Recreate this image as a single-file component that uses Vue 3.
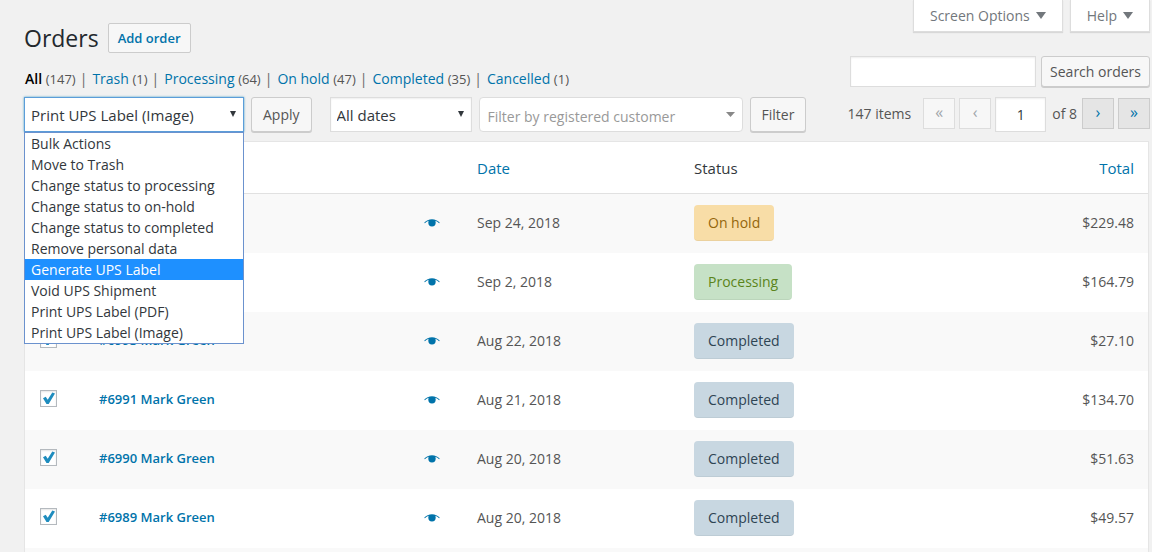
<script setup>
import { ref } from 'vue'

const views = [
  { label: 'All', count: 147, current: true },
  { label: 'Trash', count: 1 },
  { label: 'Processing', count: 64 },
  { label: 'On hold', count: 47 },
  { label: 'Completed', count: 35 },
  { label: 'Cancelled', count: 1 },
]

const actions = [
  'Bulk Actions',
  'Move to Trash',
  'Change status to processing',
  'Change status to on-hold',
  'Change status to completed',
  'Remove personal data',
  'Generate UPS Label',
  'Void UPS Shipment',
  'Print UPS Label (PDF)',
  'Print UPS Label (Image)',
]

const action = ref('Print UPS Label (Image)')
const highlighted = ref('Generate UPS Label')
const search = ref('')
const page = ref('1')

const orders = ref([
  { id: 6995, name: 'Mark Green', date: 'Sep 24, 2018', status: 'On hold', total: '$229.48', checked: true },
  { id: 6994, name: 'Mark Green', date: 'Sep 2, 2018', status: 'Processing', total: '$164.79', checked: true },
  { id: 6993, name: 'Mark Green', date: 'Aug 22, 2018', status: 'Completed', total: '$27.10', checked: true },
  { id: 6991, name: 'Mark Green', date: 'Aug 21, 2018', status: 'Completed', total: '$134.70', checked: true },
  { id: 6990, name: 'Mark Green', date: 'Aug 20, 2018', status: 'Completed', total: '$51.63', checked: true },
  { id: 6989, name: 'Mark Green', date: 'Aug 20, 2018', status: 'Completed', total: '$49.57', checked: true },
])

const statusClass = (s) => 'status-' + s.toLowerCase().replace(' ', '-')
</script>

<template>
  <main class="page">
    <header class="top">
      <div class="title">
        <h1>Orders</h1>
        <a class="add" href="#">Add order</a>
      </div>
      <div class="meta">
        <button type="button" class="tab">Screen Options
          <svg width="10" height="8" viewBox="0 0 10 8" aria-hidden="true"><path d="M0 0h10L5 7z" /></svg>
        </button>
        <button type="button" class="tab">Help
          <svg width="10" height="8" viewBox="0 0 10 8" aria-hidden="true"><path d="M0 0h10L5 7z" /></svg>
        </button>
      </div>
    </header>

    <div class="row views-row">
      <ul class="views">
        <li v-for="v in views" :key="v.label">
          <a href="#" :class="{ current: v.current }">{{ v.label }} <span class="count">({{ v.count }})</span></a>
        </li>
      </ul>
      <form class="search" @submit.prevent>
        <input v-model="search" type="search" aria-label="Search orders" />
        <button type="submit" class="button">Search orders</button>
      </form>
    </div>

    <div class="row nav-row">
      <div class="group bulk">
        <div class="pick pick-action">
          <select v-model="action" aria-label="Select bulk action">
            <option v-for="a in actions" :key="a">{{ a }}</option>
          </select>
          <svg class="arrow" width="6" height="6" viewBox="0 0 6 6" aria-hidden="true"><path d="M0 0h6L3 6z" /></svg>
          <ul class="menu" role="listbox" aria-label="Bulk actions">
            <li
              v-for="a in actions"
              :key="a"
              role="option"
              :aria-selected="a === action"
              :class="{ active: a === highlighted }"
              @mouseenter="highlighted = a"
              @click="action = a"
            >{{ a }}</li>
          </ul>
        </div>
        <button type="button" class="button">Apply</button>
      </div>
      <div class="group">
        <div class="pick pick-date">
          <select aria-label="Filter by date"><option>All dates</option></select>
          <svg class="arrow" width="6" height="6" viewBox="0 0 6 6" aria-hidden="true"><path d="M0 0h6L3 6z" /></svg>
        </div>
        <div class="pick pick-customer">
          <select aria-label="Filter by registered customer"><option>Filter by registered customer</option></select>
          <svg class="arrow" width="9" height="5" viewBox="0 0 9 5" aria-hidden="true"><path d="M0 0h9L4.500 5z" /></svg>
        </div>
        <button type="button" class="button">Filter</button>
      </div>
      <nav class="pages" aria-label="Pagination">
        <span class="items">147 items</span>
        <button type="button" class="step" disabled aria-label="First page">«</button>
        <button type="button" class="step" disabled aria-label="Previous page">‹</button>
        <input v-model="page" type="text" aria-label="Current page" />
        <span class="of">of 8</span>
        <button type="button" class="step" aria-label="Next page">›</button>
        <button type="button" class="step" aria-label="Last page">»</button>
      </nav>
    </div>

    <div class="panel">
      <table class="orders">
        <colgroup>
          <col class="c-check" />
          <col />
          <col class="c-view" />
          <col class="c-date" />
          <col class="c-status" />
          <col class="c-total" />
        </colgroup>
        <thead>
          <tr>
            <th scope="col"><input type="checkbox" aria-label="Select all" /></th>
            <th scope="col"><a href="#">Order</a></th>
            <th scope="col"></th>
            <th scope="col"><a href="#">Date</a></th>
            <th scope="col">Status</th>
            <th scope="col" class="num"><a href="#">Total</a></th>
          </tr>
        </thead>
        <tbody>
          <tr v-for="o in orders" :key="o.id">
            <td>
              <label class="check">
                <input v-model="o.checked" type="checkbox" :aria-label="'Select order ' + o.id" />
                <svg v-if="o.checked" width="17" height="17" viewBox="0 0 17 17" aria-hidden="true"><path d="M3 8.200l2.700-1.500 2 3L12.300 2.600l2.700.8L8.700 14H6.500z" /></svg>
              </label>
            </td>
            <td><a class="order" href="#">#{{ o.id }} {{ o.name }}</a></td>
            <td>
              <button type="button" class="eye" aria-label="Preview">
                <svg width="16" height="8" viewBox="0 0 16 8" aria-hidden="true">
                  <path d="M.2 3.700C2.200 1.400 5 .2 8 .2s5.800 1.200 7.800 3.500l-.7.5C14 3 12.800 2.200 11.300 1.700c.3.600.4 1.200.4 1.900a3.700 3.900 0 0 1-7.400 0c0-.7.1-1.300.4-1.900C3.200 2.200 2 3 .9 4.200z" />
                </svg>
              </button>
            </td>
            <td>{{ o.date }}</td>
            <td><mark class="status" :class="statusClass(o.status)">{{ o.status }}</mark></td>
            <td class="num">{{ o.total }}</td>
          </tr>
        </tbody>
      </table>
    </div>
  </main>
</template>

<style>
html {
  background: #f1f1f1;
}
</style>

<style scoped>
.page {
  display: flex;
  flex-direction: column;
  box-sizing: border-box;
  min-height: 100vh;
  padding: 0 2px 0 24px;
  font: 14px/20px 'Open Sans', 'Noto Sans', sans-serif;
  color: #555;
}
.page *,
.page *::before {
  box-sizing: border-box;
}
a {
  color: #0073aa;
  text-decoration: none;
}
button,
input,
select {
  font: inherit;
  color: inherit;
  margin: 0;
}
svg {
  display: block;
  fill: currentColor;
}
ul {
  margin: 0;
  padding: 0;
  list-style: none;
}
.top {
  display: flex;
  justify-content: space-between;
  align-items: flex-start;
}
.title {
  display: flex;
  align-items: center;
  gap: 9px;
  padding-top: 23px;
}
h1 {
  margin: 0;
  font-size: 23px;
  line-height: 30px;
  font-weight: 400;
  color: #23282d;
}
.add {
  padding: 4px 9px;
  border: 1px solid #ccc;
  border-radius: 2px;
  background: #f7f7f7;
  font-size: 13px;
  font-weight: 600;
  line-height: 20px;
}
.meta {
  display: flex;
  gap: 7px;
}
.tab {
  display: flex;
  align-items: center;
  gap: 6px;
  height: 32px;
  padding: 0 16px;
  border: 1px solid #ddd;
  border-top: 0;
  background: #fff;
  color: #72777c;
  box-shadow: 0 1px 1px rgba(0, 0, 0, 0.1);
}
.row {
  display: flex;
}
.views-row {
  justify-content: space-between;
  align-items: flex-end;
  margin-top: 3px;
}
.views {
  display: flex;
  padding-left: 1px;
  line-height: 16px;
}
.views li + li::before {
  content: '|';
  margin: 0 5px 0 4px;
  color: #666;
}
.views .current {
  color: #000;
  font-weight: 600;
}
.count {
  color: #555;
  font-size: 13px;
  font-weight: 400;
}
.search {
  display: flex;
  gap: 5px;
}
.search input {
  width: 186px;
  height: 31px;
  padding: 0 6px;
  border: 1px solid #ddd;
  background: #fff;
  box-shadow: inset 0 1px 2px rgba(0, 0, 0, 0.07);
}
.button {
  height: 32px;
  padding: 0 11px;
  border: 1px solid #ccc;
  border-radius: 3px;
  background: #f7f7f7;
  box-shadow: 0 1px 0 #ccc;
  white-space: nowrap;
}
.search .button {
  height: 31px;
  padding: 0 8px;
}
.nav-row {
  gap: 18px;
  margin-top: 10px;
}
.group {
  display: flex;
  gap: 7px;
}
.group .button {
  height: 35px;
}
.pick {
  position: relative;
  height: 35px;
}
.pick-action {
  width: 220px;
}
.pick-date {
  width: 142px;
}
.pick-customer {
  width: 264px;
}
.pick select {
  appearance: none;
  display: block;
  width: 100%;
  height: 100%;
  padding: 0 6px;
  border: 1px solid #ddd;
  border-radius: 0;
  background: #fff;
  color: #32373c;
  font-size: 15px;
  outline: none;
  box-shadow: inset 0 1px 2px rgba(0, 0, 0, 0.07);
}
.pick-action select {
  border-color: #5b9dd9;
  box-shadow: 0 0 2px rgba(30, 140, 190, 0.8);
}
.pick-customer select {
  padding: 4px 8px 0;
  border-radius: 4px;
  color: #999;
  font-size: 14px;
  box-shadow: none;
}
.arrow {
  position: absolute;
  top: 14px;
  right: 8px;
  color: #32373c;
  pointer-events: none;
}
.pick-customer .arrow {
  top: 15px;
  color: #888;
}
.menu {
  position: absolute;
  top: 35px;
  left: 0;
  z-index: 2;
  width: 100%;
  border: 1px solid #6b92ce;
  background: #fff;
  color: #32373c;
  line-height: 21px;
}
.menu li {
  padding: 0 6px;
  white-space: nowrap;
}
.menu .active {
  background: #1e90ff;
  color: #fff;
}
.pages {
  display: flex;
  align-items: flex-start;
  margin-left: auto;
  line-height: 34px;
}
.items {
  margin-right: 12px;
}
.step {
  width: 32px;
  height: 31px;
  margin: 1px 4px 0 0;
  padding: 0 0 4px;
  border: 1px solid #ccc;
  background: #e5e5e5;
  color: #0073aa;
  font-size: 16px;
  line-height: 24px;
}
.step:last-child {
  margin-right: 0;
}
.step:disabled {
  border-color: #ddd;
  background: #f7f7f7;
  color: #a0a5aa;
}
.pages input {
  width: 51px;
  height: 35px;
  padding: 0;
  border: 1px solid #ddd;
  background: #fff;
  color: #32373c;
  text-align: center;
  box-shadow: inset 0 1px 2px rgba(0, 0, 0, 0.07);
}
.of {
  margin: 0 5px 0 6px;
}
.panel {
  flex: 1;
  margin: 9px 1px 0 0;
  border: 1px solid #e5e5e5;
  border-bottom: 0;
  background: #f9f9f9;
}
.orders {
  width: 100%;
  border-spacing: 0;
  table-layout: fixed;
  background: #fff;
}
.c-check { width: 60px; }
.c-view { width: 53px; }
.c-date { width: 217px; }
.c-status { width: 270px; }
.c-total { width: 198px; }
th {
  height: 52px;
  padding: 0 14px;
  border-bottom: 1px solid #e1e1e1;
  font-size: 15px;
  font-weight: 400;
  text-align: left;
  color: #32373c;
}
td {
  height: 59px;
  padding: 0 14px 2px;
}
th:first-child,
td:first-child {
  padding-left: 15px;
}
tbody tr:nth-child(odd) {
  background: #f9f9f9;
}
.num {
  text-align: right;
}
.check {
  position: relative;
  display: block;
  width: 17px;
  height: 17px;
  margin-bottom: 2px;
}
.check input,
th input {
  appearance: none;
  display: block;
  width: 17px;
  height: 17px;
  border: 1px solid #b4b9be;
  background: #fff;
  box-shadow: inset 0 1px 2px rgba(0, 0, 0, 0.1);
}
.check svg {
  position: absolute;
  top: 0;
  left: 0;
  fill: #1e8cbe;
  pointer-events: none;
}
.order {
  display: block;
  padding-bottom: 2px;
  font-size: 13px;
  font-weight: 600;
}
.eye {
  display: block;
  padding: 0;
  border: 0;
  background: none;
  color: #0073aa;
}
.status {
  display: inline-block;
  padding: 0 14px;
  border-bottom: 1px solid rgba(0, 0, 0, 0.05);
  border-radius: 4px;
  line-height: 35px;
}
.status-on-hold {
  background: #f8dda7;
  color: #94660c;
}
.status-processing {
  background: #c6e1c6;
  color: #5b841b;
}
.status-completed {
  background: #c8d7e1;
  color: #2e4453;
}
</style>
